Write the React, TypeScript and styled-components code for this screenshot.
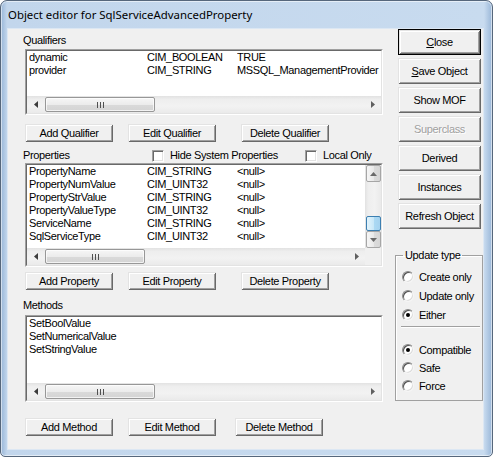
import React from "react";
import styled, { createGlobalStyle } from "styled-components";

const GlobalStyle = createGlobalStyle`
  html, body {
    margin: 0;
    padding: 0;
    background: #ffffff;
  }
  body {
    font-family: "Liberation Sans", Arial, sans-serif;
  }
`;

const UI_FONT = `"Liberation Sans", Arial, sans-serif`;

const Window = styled.div`
  box-sizing: border-box;
  width: 493px;
  height: 457px;
  border: 1px solid #56677c;
  border-radius: 7px 7px 5px 5px;
  box-shadow: inset 0 0 0 1px rgba(255, 255, 255, 0.55);
  background:
    linear-gradient(90deg, #98b6d8 0px, #c2d6ec 6px, #c8dbef calc(100% - 8px), #9ab7d8 100%);
  display: flex;
  flex-direction: column;
  padding: 0 8px 6px 6px;
  overflow: hidden;
`;

const TitleBar = styled.div`
  height: 27px;
  display: flex;
  align-items: center;
  padding-left: 1px;
`;

const Title = styled.span`
  font: 11.4px "Noto Sans", "Open Sans", sans-serif;
  color: #000;
  white-space: nowrap;
`;

const Client = styled.div`
  flex: 1;
  box-sizing: border-box;
  background: #f0f0f0;
  border: 1px solid #dce7f3;
  display: grid;
  grid-template-columns: 358px 88px;
  column-gap: 12px;
  padding-left: 17px;
  align-items: start;
  font-family: ${UI_FONT};
  font-size: 11px;
  letter-spacing: -0.35px;
  color: #000;
`;

const LeftColumn = styled.div`
  display: flex;
  flex-direction: column;
`;

const RightColumn = styled.div`
  display: flex;
  flex-direction: column;
`;

const SectionLabel = styled.div<{ $mt: number }>`
  height: 13px;
  line-height: 13px;
  margin-top: ${(p) => p.$mt}px;
  margin-left: -2px;
`;

const HeaderRow = styled.div`
  display: flex;
  align-items: center;
  height: 13px;
  margin-top: 7px;
  margin-left: -2px;
`;

const HeaderLabel = styled.span`
  width: 129px;
  line-height: 13px;
`;

const CheckItem = styled.label<{ $w?: number }>`
  display: flex;
  align-items: center;
  gap: 6px;
  width: ${(p) => (p.$w ? `${p.$w}px` : "auto")};
  line-height: 13px;
`;

const CheckBox = styled.span`
  box-sizing: border-box;
  width: 12px;
  height: 12px;
  background: #fff;
  border: 1px solid;
  border-color: #a0a0a0 #ffffff #ffffff #a0a0a0;
  box-shadow: inset 1px 1px #696969, inset -1px -1px #e3e3e3;
`;

/* ---------- list boxes ---------- */

const ListFrame = styled.div<{ $h: number; $mt: number }>`
  box-sizing: border-box;
  width: 358px;
  height: ${(p) => p.$h}px;
  margin-top: ${(p) => p.$mt}px;
  border: 1px solid;
  border-color: #a0a0a0 #ffffff #ffffff #a0a0a0;
`;

const ListInner = styled.div<{ $vscroll?: boolean }>`
  box-sizing: border-box;
  height: 100%;
  border: 1px solid;
  border-color: #696969 #e3e3e3 #e3e3e3 #696969;
  background: #fff;
  display: grid;
  grid-template-columns: ${(p) => (p.$vscroll ? "1fr 16px" : "1fr")};
  grid-template-rows: 1fr 17px;
  overflow: hidden;
`;

const ListBody = styled.div`
  overflow: hidden;
  padding-left: 2px;
`;

const Row = styled.div`
  display: flex;
  height: 13px;
  line-height: 13px;
  white-space: nowrap;
`;

const Cell = styled.span<{ $w?: number }>`
  flex: ${(p) => (p.$w ? `0 0 ${p.$w}px` : "1 0 auto")};
  overflow: hidden;
`;

const Corner = styled.div`
  background: #f0f0f0;
`;

/* ---------- scroll bars ---------- */

const HBar = styled.div`
  display: flex;
  align-items: stretch;
  background: linear-gradient(#e2e2e2 0%, #eeeeee 20%, #f2f2f2 60%, #eaeaea 100%);
`;

const VBar = styled.div`
  display: flex;
  flex-direction: column;
  background: linear-gradient(90deg, #e2e2e2 0%, #eeeeee 20%, #f2f2f2 60%, #eaeaea 100%);
`;

const ArrowCell = styled.div`
  flex: 0 0 17px;
  display: flex;
  align-items: center;
  justify-content: center;
`;

const ArrowButton = styled.div`
  box-sizing: border-box;
  flex: 0 0 17px;
  margin: 0 0 0 1px;
  display: flex;
  align-items: center;
  justify-content: center;
  border: 1px solid #a6a6a6;
  border-radius: 2px;
  background: linear-gradient(90deg, #f6f6f6, #e9e9e9 50%, #dcdcdc 51%, #d6d6d6);
`;

const HTrack = styled.div`
  flex: 1;
  display: flex;
  padding: 1px 0;
`;

const VTrack = styled.div`
  flex: 1;
  display: flex;
  flex-direction: column;
`;

const HThumb = styled.div<{ $offset: number; $size: number }>`
  box-sizing: border-box;
  margin-left: ${(p) => p.$offset}px;
  width: ${(p) => p.$size}px;
  border: 1px solid #979797;
  border-radius: 2px;
  background: linear-gradient(#f6f6f6, #ececec 50%, #dadada 51%, #d4d4d4);
  box-shadow: inset 0 0 0 1px rgba(255, 255, 255, 0.7);
  display: flex;
  align-items: center;
  justify-content: center;
`;

const VThumb = styled.div<{ $offset: number; $size: number }>`
  box-sizing: border-box;
  margin-top: ${(p) => p.$offset}px;
  height: ${(p) => p.$size}px;
  margin-left: 1px;
  border: 1px solid #3c7fb1;
  border-radius: 2px;
  background: linear-gradient(90deg, #e3f4fc, #c9e8f8 50%, #acdaf4 51%, #a4d2ef);
`;

const Triangle = ({ dir, color }: { dir: "left" | "right" | "up" | "down"; color: string }) => {
  const horizontal = dir === "left" || dir === "right";
  const points = {
    left: "4,0 4,7 0,3.5",
    right: "0,0 0,7 4,3.5",
    up: "0,4 7,4 3.5,0",
    down: "0,0 7,0 3.5,4",
  }[dir];
  return (
    <svg width={horizontal ? 4 : 7} height={horizontal ? 7 : 4} viewBox={horizontal ? "0 0 4 7" : "0 0 7 4"}>
      <polygon points={points} fill={color} />
    </svg>
  );
};

const Grip = () => (
  <svg width="7" height="6" viewBox="0 0 7 6">
    <rect x="0" y="0" width="1" height="6" fill="#505050" />
    <rect x="3" y="0" width="1" height="6" fill="#505050" />
    <rect x="6" y="0" width="1" height="6" fill="#505050" />
  </svg>
);

const HScroll = ({ offset, size }: { offset: number; size: number }) => (
  <HBar>
    <ArrowCell>
      <Triangle dir="left" color="#3c3c3c" />
    </ArrowCell>
    <HTrack>
      <HThumb $offset={offset} $size={size}>
        <Grip />
      </HThumb>
    </HTrack>
    <ArrowCell>
      <Triangle dir="right" color="#606060" />
    </ArrowCell>
  </HBar>
);

const VScroll = ({ offset, size }: { offset: number; size: number }) => (
  <VBar>
    <ArrowButton>
      <Triangle dir="up" color="#6a6a6a" />
    </ArrowButton>
    <VTrack>
      <VThumb $offset={offset} $size={size} />
    </VTrack>
    <ArrowButton>
      <Triangle dir="down" color="#6a6a6a" />
    </ArrowButton>
  </VBar>
);

/* ---------- buttons ---------- */

const ButtonRow = styled.div<{ $mt: number }>`
  display: flex;
  margin-top: ${(p) => p.$mt}px;
`;

const Button = styled.button<{ $ml?: number }>`
  box-sizing: border-box;
  width: 88px;
  height: 18px;
  margin: 0 0 0 ${(p) => p.$ml ?? 0}px;
  padding: 0;
  font-family: ${UI_FONT};
  font-size: 11px;
  letter-spacing: -0.35px;
  color: #000;
  background: #f0f0f0;
  border: none;
  box-shadow: inset 1px 1px #e3e3e3, inset -1px -1px #696969, inset 2px 2px #ffffff,
    inset -2px -2px #a0a0a0;
`;

const SideButton = styled(Button)<{ $default?: boolean; $disabled?: boolean }>`
  width: 83px;
  height: 26px;
  margin: 3px 0 0 3px;
  &:first-child {
    margin-top: 0;
  }
  color: ${(p) => (p.$disabled ? "#a0a0a0" : "#000")};
  text-shadow: ${(p) => (p.$disabled ? "1px 1px #ffffff" : "none")};
  box-shadow: ${(p) =>
    p.$default
      ? "inset 0 0 0 1px #000, inset 2px 2px #e3e3e3, inset -2px -2px #696969, inset 3px 3px #ffffff, inset -3px -3px #a0a0a0"
      : "inset 1px 1px #e3e3e3, inset -1px -1px #696969, inset 2px 2px #ffffff, inset -2px -2px #a0a0a0"};
`;

/* ---------- update type group ---------- */

const GroupBox = styled.fieldset`
  box-sizing: border-box;
  margin: 20px 0 0 0;
  padding: 5px 0 0 6px;
  height: 152px;
  border: 1px solid #a0a0a0;
  box-shadow: inset 1px 1px #ffffff;
  min-width: 0;
`;

const GroupTitle = styled.legend`
  margin-left: 1px;
  padding: 0 2px;
  line-height: 13px;
`;

const RadioRow = styled.div<{ $h: number }>`
  display: flex;
  align-items: center;
  gap: 5px;
  height: ${(p) => p.$h}px;
`;

const RadioCircle = styled.span<{ $checked?: boolean }>`
  box-sizing: border-box;
  width: 12px;
  height: 12px;
  border-radius: 50%;
  background: #fff;
  border: 1px solid;
  border-color: #8a8a8a #f4f4f4 #f4f4f4 #8a8a8a;
  box-shadow: inset 1px 1px #505050, inset -1px -1px #dcdcdc;
  display: flex;
  align-items: center;
  justify-content: center;
  &::after {
    content: "";
    width: 4px;
    height: 4px;
    border-radius: 50%;
    background: ${(p) => (p.$checked ? "#000" : "transparent")};
  }
`;

const Separator = styled.div`
  height: 1px;
  margin: 2px 2px 14px -1px;
  background: #a0a0a0;
  box-shadow: 0 1px #ffffff;
`;

/* ---------- data ---------- */

const qualifiers = [
  ["dynamic", "CIM_BOOLEAN", "TRUE"],
  ["provider", "CIM_STRING", "MSSQL_ManagementProvider"],
];

const properties = [
  ["PropertyName", "CIM_STRING", "<null>"],
  ["PropertyNumValue", "CIM_UINT32", "<null>"],
  ["PropertyStrValue", "CIM_STRING", "<null>"],
  ["PropertyValueType", "CIM_UINT32", "<null>"],
  ["ServiceName", "CIM_STRING", "<null>"],
  ["SqlServiceType", "CIM_UINT32", "<null>"],
];

const methods = ["SetBoolValue", "SetNumericalValue", "SetStringValue"];

const Radio = ({ label, checked, h }: { label: string; checked?: boolean; h: number }) => (
  <RadioRow $h={h}>
    <RadioCircle $checked={checked} />
    <span>{label}</span>
  </RadioRow>
);

export default function App() {
  return (
    <>
      <GlobalStyle />
      <Window>
        <TitleBar>
          <Title>Object editor for SqlServiceAdvancedProperty</Title>
        </TitleBar>
        <Client>
          <LeftColumn>
            <SectionLabel $mt={5}>Qualifiers</SectionLabel>
            <ListFrame $h={66} $mt={2}>
              <ListInner>
                <ListBody>
                  {qualifiers.map(([n, t, v]) => (
                    <Row key={n}>
                      <Cell $w={118}>{n}</Cell>
                      <Cell $w={90}>{t}</Cell>
                      <Cell>{v}</Cell>
                    </Row>
                  ))}
                </ListBody>
                <HScroll offset={1} size={110} />
              </ListInner>
            </ListFrame>
            <ButtonRow $mt={9}>
              <Button>Add Qualifier</Button>
              <Button $ml={15}>Edit Qualifier</Button>
              <Button $ml={25}>Delete Qualifier</Button>
            </ButtonRow>

            <HeaderRow>
              <HeaderLabel>Properties</HeaderLabel>
              <CheckItem $w={153}>
                <CheckBox />
                Hide System Properties
              </CheckItem>
              <CheckItem>
                <CheckBox />
                Local Only
              </CheckItem>
            </HeaderRow>
            <ListFrame $h={104} $mt={1}>
              <ListInner $vscroll>
                <ListBody>
                  {properties.map(([n, t, v]) => (
                    <Row key={n}>
                      <Cell $w={118}>{n}</Cell>
                      <Cell $w={90}>{t}</Cell>
                      <Cell>{v}</Cell>
                    </Row>
                  ))}
                </ListBody>
                <VScroll offset={34} size={15} />
                <HScroll offset={1} size={100} />
                <Corner />
              </ListInner>
            </ListFrame>
            <ButtonRow $mt={5}>
              <Button>Add Property</Button>
              <Button $ml={15}>Edit Property</Button>
              <Button $ml={25}>Delete Property</Button>
            </ButtonRow>

            <SectionLabel $mt={9}>Methods</SectionLabel>
            <ListFrame $h={87} $mt={3}>
              <ListInner>
                <ListBody>
                  {methods.map((m) => (
                    <Row key={m}>
                      <Cell>{m}</Cell>
                    </Row>
                  ))}
                </ListBody>
                <HScroll offset={1} size={110} />
              </ListInner>
            </ListFrame>
            <ButtonRow $mt={16}>
              <Button>Add Method</Button>
              <Button $ml={15}>Edit Method</Button>
              <Button $ml={19}>Delete Method</Button>
            </ButtonRow>
          </LeftColumn>

          <RightColumn>
            <SideButton $default>
              <u>C</u>lose
            </SideButton>
            <SideButton>
              <u>S</u>ave Object
            </SideButton>
            <SideButton>Show MOF</SideButton>
            <SideButton $disabled>Superclass</SideButton>
            <SideButton>Derived</SideButton>
            <SideButton>Instances</SideButton>
            <SideButton>Refresh Object</SideButton>
            <GroupBox>
              <GroupTitle>Update type</GroupTitle>
              <Radio label="Create only" h={19} />
              <Radio label="Update only" h={19} />
              <Radio label="Either" checked h={19} />
              <Separator />
              <Radio label="Compatible" checked h={18} />
              <Radio label="Safe" h={18} />
              <Radio label="Force" h={18} />
            </GroupBox>
          </RightColumn>
        </Client>
      </Window>
    </>
  );
}
